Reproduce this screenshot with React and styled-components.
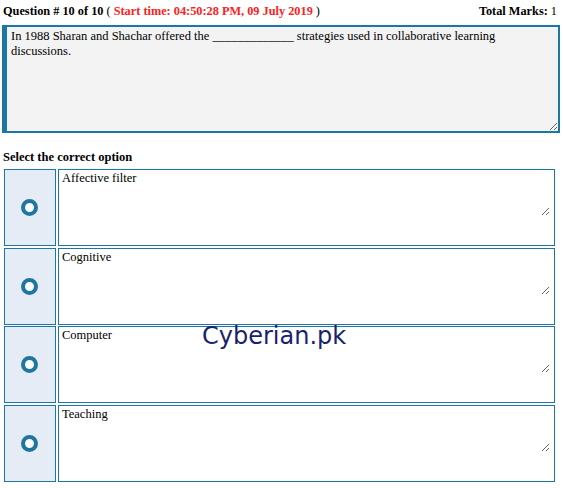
import React from 'react';
import styled, { createGlobalStyle } from 'styled-components';

const GlobalStyle = createGlobalStyle`
  body {
    margin: 0;
    background: #fff;
    font-family: "Liberation Serif", "Times New Roman", serif;
    font-size: 12.5px;
    color: #000;
  }
`;

const Page = styled.div`
  position: relative;
  width: 563px;
  padding: 4px 3px 0 2px;
  box-sizing: border-box;
`;

const Header = styled.div`
  display: flex;
  justify-content: space-between;
  align-items: baseline;
  padding: 0 3px 0 1px;
  height: 20px;
  line-height: 15px;
  font-size: 12.3px;
  color: #000;
`;

const Bold = styled.b`
  font-weight: bold;
  color: ${p => p.red ? '#ff2121' : '#000'};
`;

const QuestionBox = styled.textarea`
  display: block;
  width: 558px;
  height: 108px;
  box-sizing: border-box;
  margin: 1px 0 0;
  padding: 2px 4px;
  border: 2px solid #1b77a3;
  border-left-width: 5px;
  background: #f3f3f3;
  font-family: "Liberation Serif", "Times New Roman", serif;
  font-size: 12.5px;
  line-height: 15px;
  color: #000;
  resize: both;
  outline: none;
`;

const Label = styled.div`
  font-weight: bold;
  margin: 17px 0 0 1px;
  line-height: 15px;
`;

const Options = styled.div`
  display: flex;
  flex-direction: column;
  gap: 1.6px;
  margin: 4px 0 0 2px;
`;

const Row = styled.div`
  display: flex;
  gap: 2px;
  height: 77px;
`;

const RadioCell = styled.div`
  width: 52px;
  box-sizing: border-box;
  border: 1.5px solid #1b77a3;
  background: #e6ecf5;
  display: flex;
  align-items: center;
  justify-content: center;
`;

const Radio = styled.span`
  width: 17px;
  height: 17px;
  box-sizing: border-box;
  border-radius: 50%;
  border: 4px solid #1f77a1;
  background: #fff;
  margin-right: 2px;
`;

const AnswerCell = styled.div`
  width: 497px;
  box-sizing: border-box;
  border: 1.5px solid #1b77a3;
  background: #fff;
`;

const AnswerBox = styled.textarea`
  display: block;
  width: 491px;
  height: 46px;
  box-sizing: border-box;
  border: none;
  padding: 1px 3px;
  margin: 0;
  background: transparent;
  font-family: "Liberation Serif", "Times New Roman", serif;
  font-size: 12.5px;
  line-height: 15px;
  color: #000;
  resize: both;
  outline: none;
`;

const Watermark = styled.div`
  position: absolute;
  left: 202px;
  top: 322px;
  font-family: "DejaVu Sans", Verdana, sans-serif;
  font-size: 24px;
  color: #1a1f6e;
  pointer-events: none;
`;

const answers = ['Affective filter', 'Cognitive', 'Computer', 'Teaching'];

export default function App() {
  return (
    <>
      <GlobalStyle />
      <Page>
        <Header>
          <span>
            <Bold>Question # 10 of 10</Bold> ( <Bold red>Start time: 04:50:28 PM, 09 July 2019</Bold> )
          </span>
          <span>
            <Bold>Total Marks:</Bold> 1
          </span>
        </Header>
        <QuestionBox
          readOnly
          value="In 1988 Sharan and Shachar offered the _____________ strategies used in collaborative learning discussions."
        />
        <Label>Select the correct option</Label>
        <Options>
          {answers.map(a => (
            <Row key={a}>
              <RadioCell>
                <Radio />
              </RadioCell>
              <AnswerCell>
                <AnswerBox readOnly value={a} />
              </AnswerCell>
            </Row>
          ))}
        </Options>
        <Watermark>Cyberian.pk</Watermark>
      </Page>
    </>
  );
}
